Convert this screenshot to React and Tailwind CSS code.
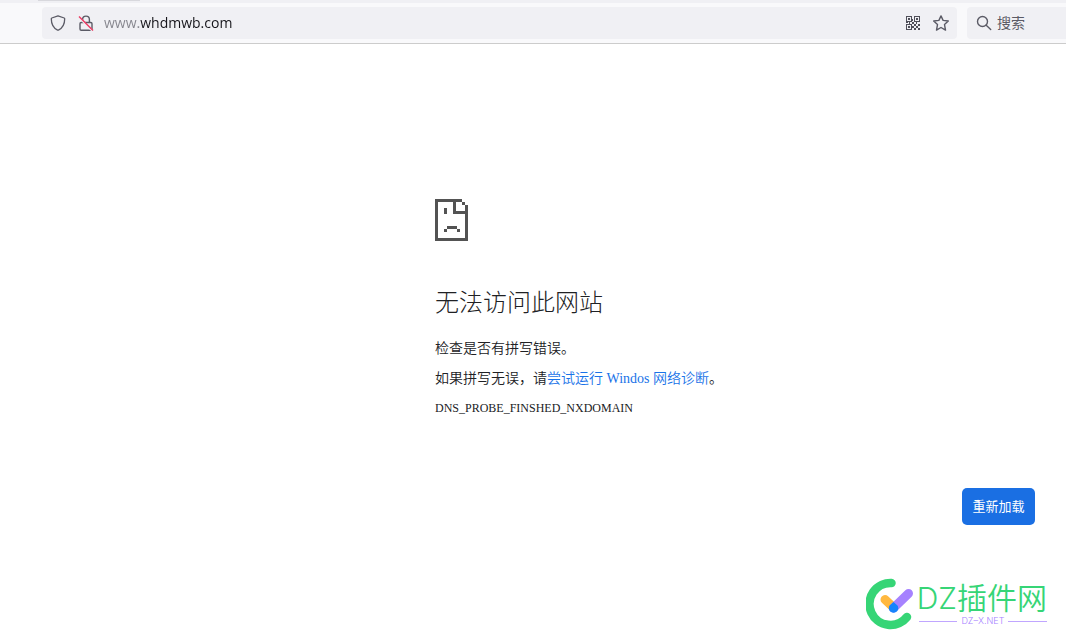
function ShieldIcon() {
  return (
    <svg width="16" height="16" viewBox="0 0 16 16" fill="none" stroke="#5b5b66" strokeWidth="1.3" strokeLinejoin="round">
      <path d="M8 .8 14.2 3c.3.1.5.4.5.7 0 5-2 9.300-6.300 11.400a1 1 0 0 1-.8 0C3.300 13 1.300 8.700 1.300 3.700c0-.3.2-.6.5-.7Z" />
    </svg>
  )
}

function InsecureLockIcon() {
  return (
    <svg width="16" height="16" viewBox="0 0 16 16" fill="none" strokeWidth="1.4">
      <path d="M4.600 7.500V4.500a3.400 3.400 0 0 1 6.800 0v3" stroke="#5b5b66" />
      <rect x="2" y="7.500" width="12" height="7.800" rx="1.200" stroke="#5b5b66" />
      <path d="M1 2.500 14.500 16" stroke="#f0f0f4" strokeWidth="2" />
      <path d="M1 1.500 15 15.500" stroke="#ec3a62" />
    </svg>
  )
}

function QrIcon() {
  return (
    <svg width="14" height="14" viewBox="0 0 14 14" fill="#4f4f59" shapeRendering="crispEdges">
      <path fillRule="evenodd" d="M0 0h6v6H0ZM1 1v4h4V1ZM8 0h6v6H8ZM9 1v4h4V1ZM0 8h6v6H0ZM1 9v4h4V9Z" />
      <path d="M2 2h2v2H2ZM10 2h2v2h-2ZM2 10h2v2H2Z" />
      <path d="M6 3h1v2H6ZM6 6h2v2H6ZM0 6h2v1H0ZM3 6h1v2H3ZM8 8h2v2H8ZM10 6h1v2h-1ZM12 8h2v2h-2ZM10 10h2v2h-2ZM6 10h2v2H6ZM8 12h2v2H8ZM12 12h2v2h-2Z" />
    </svg>
  )
}

function StarIcon() {
  return (
    <svg width="16" height="16" viewBox="0 0 16 16" fill="none" stroke="#5b5b66" strokeWidth="1.4" strokeLinejoin="round">
      <path d="m8 .9 2.100 4.500 5.200.6-3.800 3.600 1 5.500L8 12.500l-4.500 2.600 1-5.500L.7 6l5.200-.6Z" />
    </svg>
  )
}

function SearchIcon() {
  return (
    <svg width="16" height="16" viewBox="0 0 16 16" fill="none" stroke="#5b5b66" strokeWidth="1.4" strokeLinecap="round">
      <circle cx="6.500" cy="6.500" r="5" />
      <path d="m10.200 10.200 4.500 4.300" />
    </svg>
  )
}

function SadPageIcon() {
  return (
    <svg width="33" height="42" viewBox="0 0 33 42" fill="#535353" shapeRendering="crispEdges">
      <path d="M0 0h27v3H3v36h27V15H18V3h3v9h9V6h3v36H0Z" />
      <path d="M27 3h3v3h-3ZM9 9h3v6H9ZM12 27h10v3H12ZM9 30h3v3H9ZM22 30h3v3h-3Z" />
    </svg>
  )
}

function BrandLogo() {
  return (
    <svg width="48" height="52" viewBox="0 0 48 52" fill="none" strokeLinecap="round">
      <path d="M25.500 5A21 21 0 1 0 41 39" stroke="#36d576" strokeWidth="8.500" />
      <path d="m19 21.500 8.500 8" stroke="#ffb83f" strokeWidth="9" />
      <path d="M42.500 15.500 27.500 30" stroke="#a682ff" strokeWidth="9" />
      <path d="m27.500 24 4.200 3.800a4.700 4.700 0 1 1-8.300 0Z" fill="#1684fc" />
    </svg>
  )
}

export default function App() {
  return (
    <div className="min-h-screen flex flex-col bg-white font-['Liberation_Serif','Noto_Sans_CJK_SC',serif] text-[#202124]">
      {/* Browser toolbar */}
      <header className="border-b border-[#cccccc] bg-[#f9f9fb]">
        <div className="h-[3px] bg-[#f0f0f4] pl-[38px]">
          <div className="h-px w-[102px] bg-[#d8d8dd]" />
        </div>
        <div className="flex gap-[10px] pl-[42px] py-1 font-['Open_Sans','Noto_Sans_CJK_SC',sans-serif]">
          <div className="h-8 flex-1 min-w-0 flex items-center gap-3 rounded bg-[#f0f0f4] px-2">
            <ShieldIcon />
            <InsecureLockIcon />
            {/* the subdomain is dimmed through the gradient */}
            <input
              type="text"
              aria-label="URL"
              defaultValue="www.whdmwb.com"
              className="min-w-0 flex-1 h-5 -ml-0.5 text-sm outline-none text-transparent caret-black bg-clip-text bg-[linear-gradient(to_right,#84848c_35px,#15141a_35px)]"
            />
            <button aria-label="QR" className="w-4 flex justify-center"><QrIcon /></button>
            <button aria-label="Bookmark"><StarIcon /></button>
          </div>
          <div className="h-8 w-[99px] flex items-center gap-1 rounded-l bg-[#f0f0f4] pl-[9px]">
            <SearchIcon />
            <input
              type="search"
              aria-label="搜索"
              placeholder="搜索"
              className="min-w-0 flex-1 pl-px bg-transparent text-sm outline-none placeholder:text-[#5b5b66]"
            />
          </div>
        </div>
      </header>

      {/* Error message */}
      <main className="flex-1 self-end w-[600px] max-w-full mr-[31px] pt-[155px]">
        <SadPageIcon />
        <h1 className="mt-11 text-2xl leading-9 font-light">无法访问此网站</h1>
        <div className="mt-[13px] text-sm leading-[30px] font-[350]">
          <p>检查是否有拼写错误。</p>
          <p>
            如果拼写无误，请<a href="#" className="text-[#1a73e8]">尝试运行 Windos 网络诊断</a>。
          </p>
          <p className="text-xs leading-7">DNS_PROBE_FINSHED_NXDOMAIN</p>
        </div>
        <div className="mt-[66px] flex justify-end">
          <button className="h-[37px] min-w-[73px] rounded-[5px] bg-[#1a6fe3] px-[10px] text-[13px] text-white">
            重新加载
          </button>
        </div>
      </main>

      <footer className="flex justify-end items-center gap-[3px] pr-[19px] pb-[14px] font-['Inter','Noto_Sans_CJK_SC',sans-serif]">
        <BrandLogo />
        <div>
          <div className="text-[30px] leading-8 font-[350] text-[#36d576]">DZ插件网</div>
          <div className="mt-0.5 flex items-center gap-1 pl-0.5 text-[9px] leading-[10px] font-light text-[#a682ff]">
            <span className="h-px flex-1 bg-[#c0a6ff]" />
            DZ–X.NET
            <span className="h-px flex-1 bg-[#c0a6ff]" />
          </div>
        </div>
      </footer>
    </div>
  )
}
